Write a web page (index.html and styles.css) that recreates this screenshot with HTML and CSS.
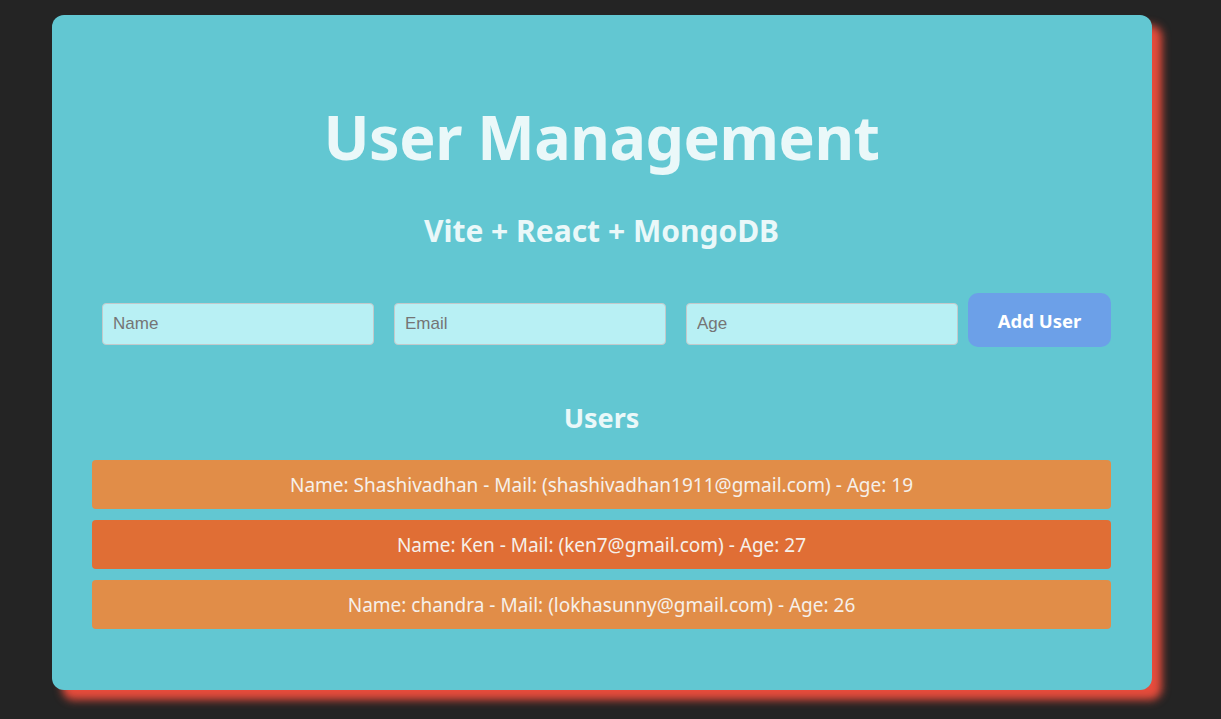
FILE: index.html
```html
<!DOCTYPE html>
<html lang="en">
<head>
<meta charset="utf-8">
<title>User Management</title>
<link rel="stylesheet" href="styles.css">
</head>
<body>
<main class="card">
  <h1 class="title">User Management</h1>
  <h2 class="subtitle">Vite + React + MongoDB</h2>
  <form class="form">
    <input class="field" type="text" placeholder="Name">
    <input class="field" type="email" placeholder="Email">
    <input class="field" type="number" placeholder="Age">
    <button class="add-btn" type="button">Add User</button>
  </form>
  <h3 class="users-title">Users</h3>
  <ul class="users">
    <li class="user">Name: Shashivadhan - Mail: (shashivadhan1911@gmail.com) - Age: 19</li>
    <li class="user user-alt">Name: Ken - Mail: (ken7@gmail.com) - Age: 27</li>
    <li class="user">Name: chandra - Mail: (lokhasunny@gmail.com) - Age: 26</li>
  </ul>
</main>
</body>
</html>
```
FILE: styles.css
```css
* { box-sizing: border-box; }
html, body { margin: 0; padding: 0; }
body {
  background: #242424;
  font-family: "Noto Sans", "Open Sans", sans-serif;
  color: #eaf8f9;
  padding: 15px 69px 29px 52px;
}
.card {
  width: 1100px;
  height: 675px;
  background: #62c7d2;
  border-radius: 12px;
  box-shadow: 10px 10px 8px #e74c3c;
  padding: 80px 41px 40px 40px;
  display: flex;
  flex-direction: column;
}
.title {
  margin: 0;
  text-align: center;
  font-size: 61px;
  line-height: 84px;
  font-weight: 700;
  letter-spacing: -0.5px;
}
.subtitle {
  margin: 32px 0 0;
  text-align: center;
  font-size: 30px;
  line-height: 39px;
  font-weight: 700;
}
.form {
  margin: 43px 0 0;
  display: flex;
  align-items: flex-start;
  gap: 20px;
  padding-left: 10px;
}
.field {
  margin-top: 10px;
  width: 272px;
  height: 42px;
  background: #b8f0f4;
  border: 1px solid #c3c9cb;
  border-radius: 4px;
  padding: 0 10px;
  font-family: "Liberation Sans", Arial, sans-serif;
  font-size: 17px;
  color: #333;
}
.field::placeholder { color: #757575; }
.add-btn {
  margin-left: -10px;
  width: 143px;
  height: 54px;
  background: #6ca0e8;
  border: none;
  border-radius: 10px;
  color: #fff;
  font-family: "Noto Sans", "Open Sans", sans-serif;
  font-size: 18.5px;
  font-weight: 700;
}
.users-title {
  margin: 53px 0 0;
  text-align: center;
  font-size: 27px;
  line-height: 35px;
  font-weight: 700;
}
.users {
  list-style: none;
  margin: 25px 0 0;
  padding: 0;
  display: flex;
  flex-direction: column;
  gap: 11px;
}
.user {
  height: 49px;
  background: #e18d48;
  border-radius: 4px;
  display: flex;
  align-items: center;
  justify-content: center;
  font-size: 19px;
  color: #f6f0ea;
}
.user-alt { background: #e06e35; }
```
